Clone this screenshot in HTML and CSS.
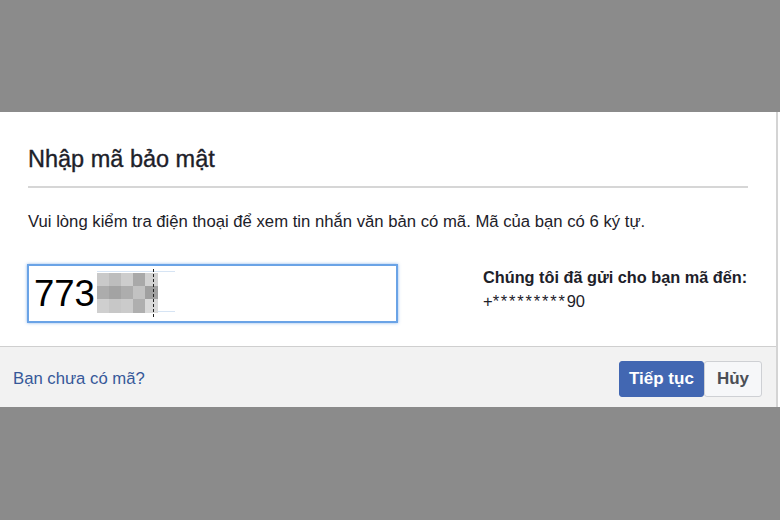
FILE: index.html
```html
<!DOCTYPE html>
<html lang="vi">
<head>
<meta charset="utf-8">
<title>Nhập mã bảo mật</title>
<link rel="stylesheet" href="styles.css">
</head>
<body>
<div class="frame">
  <div class="dialog">
    <div class="content">
      <h1 class="title">Nhập mã bảo mật</h1>
      <div class="divider"></div>
      <p class="desc">Vui lòng kiểm tra điện thoại để xem tin nhắn văn bản có mã. Mã của bạn có 6 ký tự.</p>
      <div class="row">
        <div class="code-field">
          <span class="code">773</span>
          <span class="sel-line sel-top"></span>
          <span class="sel-line sel-bottom"></span>
          <svg class="blur" width="61" height="40" viewBox="0 0 61 40" aria-hidden="true">
            <rect x="0" y="0" width="13" height="14" fill="#c9c9c9"/>
            <rect x="12" y="0" width="13" height="14" fill="#bdbdbd"/>
            <rect x="24" y="0" width="13" height="14" fill="#cdcdcd"/>
            <rect x="36" y="0" width="13" height="14" fill="#a9a9a9"/>
            <rect x="48" y="0" width="13" height="14" fill="#d2d2d2"/>
            <rect x="0" y="13" width="13" height="14" fill="#acacac"/>
            <rect x="12" y="13" width="13" height="14" fill="#a3a3a3"/>
            <rect x="24" y="13" width="13" height="14" fill="#adadad"/>
            <rect x="36" y="13" width="13" height="14" fill="#c2c2c2"/>
            <rect x="48" y="13" width="13" height="14" fill="#a0a0a0"/>
            <rect x="0" y="26" width="13" height="14" fill="#cfcfcf"/>
            <rect x="12" y="26" width="13" height="14" fill="#c7c7c7"/>
            <rect x="24" y="26" width="13" height="14" fill="#cbcbcb"/>
            <rect x="36" y="26" width="13" height="14" fill="#afafaf"/>
            <rect x="48" y="26" width="13" height="14" fill="#dadada"/>
          </svg>
          <span class="caret"></span>
        </div>
        <div class="sent">
          <div class="sent-label">Chúng tôi đã gửi cho bạn mã đến:</div>
          <div class="sent-number">+<span class="stars">*********</span>90</div>
        </div>
      </div>
    </div>
    <div class="footer">
      <a class="link" href="#">Bạn chưa có mã?</a>
      <div class="actions">
        <button class="btn btn-primary" type="button">Tiếp tục</button>
        <button class="btn btn-cancel" type="button">Hủy</button>
      </div>
    </div>
  </div>
</div>
</body>
</html>
```

FILE: styles.css
```css
html, body {
  margin: 0;
  padding: 0;
}

body {
  background: #8b8b8b;
  font-family: "Liberation Sans", Arial, Helvetica, sans-serif;
  color: #1d2129;
  height: 520px;
  overflow: hidden;
}

.frame {
  margin-top: 112px;
  background: #ffffff;
}

.dialog {
  width: 776px;
  border-right: 2px solid #d4d4d4;
}

.content {
  padding: 33px 28px 23px 28px;
}

.title {
  margin: 0;
  font-size: 23.5px;
  line-height: 28px;
  font-weight: normal;
  color: #1d2129;
  -webkit-text-stroke: 0.35px #1d2129;
}

.divider {
  height: 2px;
  background: #d6d6d6;
  margin-top: 13px;
}

.desc {
  margin: 24px 0 0;
  font-size: 16.7px;
  line-height: 20px;
  color: #1d2129;
}

.row {
  display: flex;
  align-items: flex-start;
  margin-top: 32px;
}

.code-field {
  position: relative;
  box-sizing: border-box;
  width: 371px;
  height: 59px;
  margin-left: -1px;
  border: 2px solid #6aa3e6;
  box-shadow: 0 0 3px rgba(90, 150, 225, 0.7);
  display: flex;
  align-items: center;
  padding-left: 5px;
  background: #fff;
}

.code {
  font-size: 36.5px;
  line-height: 40px;
  color: #000;
}

.blur {
  position: absolute;
  left: 68px;
  top: 7px;
  filter: blur(0.6px);
}

.sel-line {
  position: absolute;
  left: 68px;
  width: 78px;
  height: 1px;
  background: #d6e4f4;
}

.sel-top {
  top: 5px;
}

.sel-bottom {
  top: 45px;
}

.caret {
  position: absolute;
  left: 124px;
  top: 3px;
  width: 1px;
  height: 49px;
  background: repeating-linear-gradient(to bottom, #222 0 3px, transparent 3px 5px);
}

.sent {
  margin-left: 85px;
  margin-top: 1px;
  font-size: 16.5px;
  line-height: 24px;
  color: #1d2129;
}

.sent-label {
  font-weight: bold;
  font-size: 16.3px;
}

.stars {
  letter-spacing: 1.8px;
}

.footer {
  border-top: 1px solid #cfcfcf;
  background: #f2f2f2;
  height: 60px;
  display: flex;
  align-items: center;
  justify-content: space-between;
  padding: 0 14px 0 13px;
}

.link {
  color: #365899;
  font-size: 16.7px;
  line-height: 20px;
  text-decoration: none;
  margin-top: 4px;
}

.actions {
  display: flex;
  margin-top: 4px;
}

.btn {
  font-family: "Liberation Sans", Arial, Helvetica, sans-serif;
  font-weight: bold;
  font-size: 17px;
  height: 36px;
  line-height: 34px;
  border-radius: 3px;
  margin: 0;
  cursor: pointer;
}

.btn-primary {
  background: #4267b2;
  border: 1px solid #4267b2;
  color: #ffffff;
  padding: 0 9px;
}

.btn-cancel {
  background: #f6f7f9;
  border: 1px solid #ced0d4;
  color: #4b4f56;
  padding: 0 12px;
}
```
